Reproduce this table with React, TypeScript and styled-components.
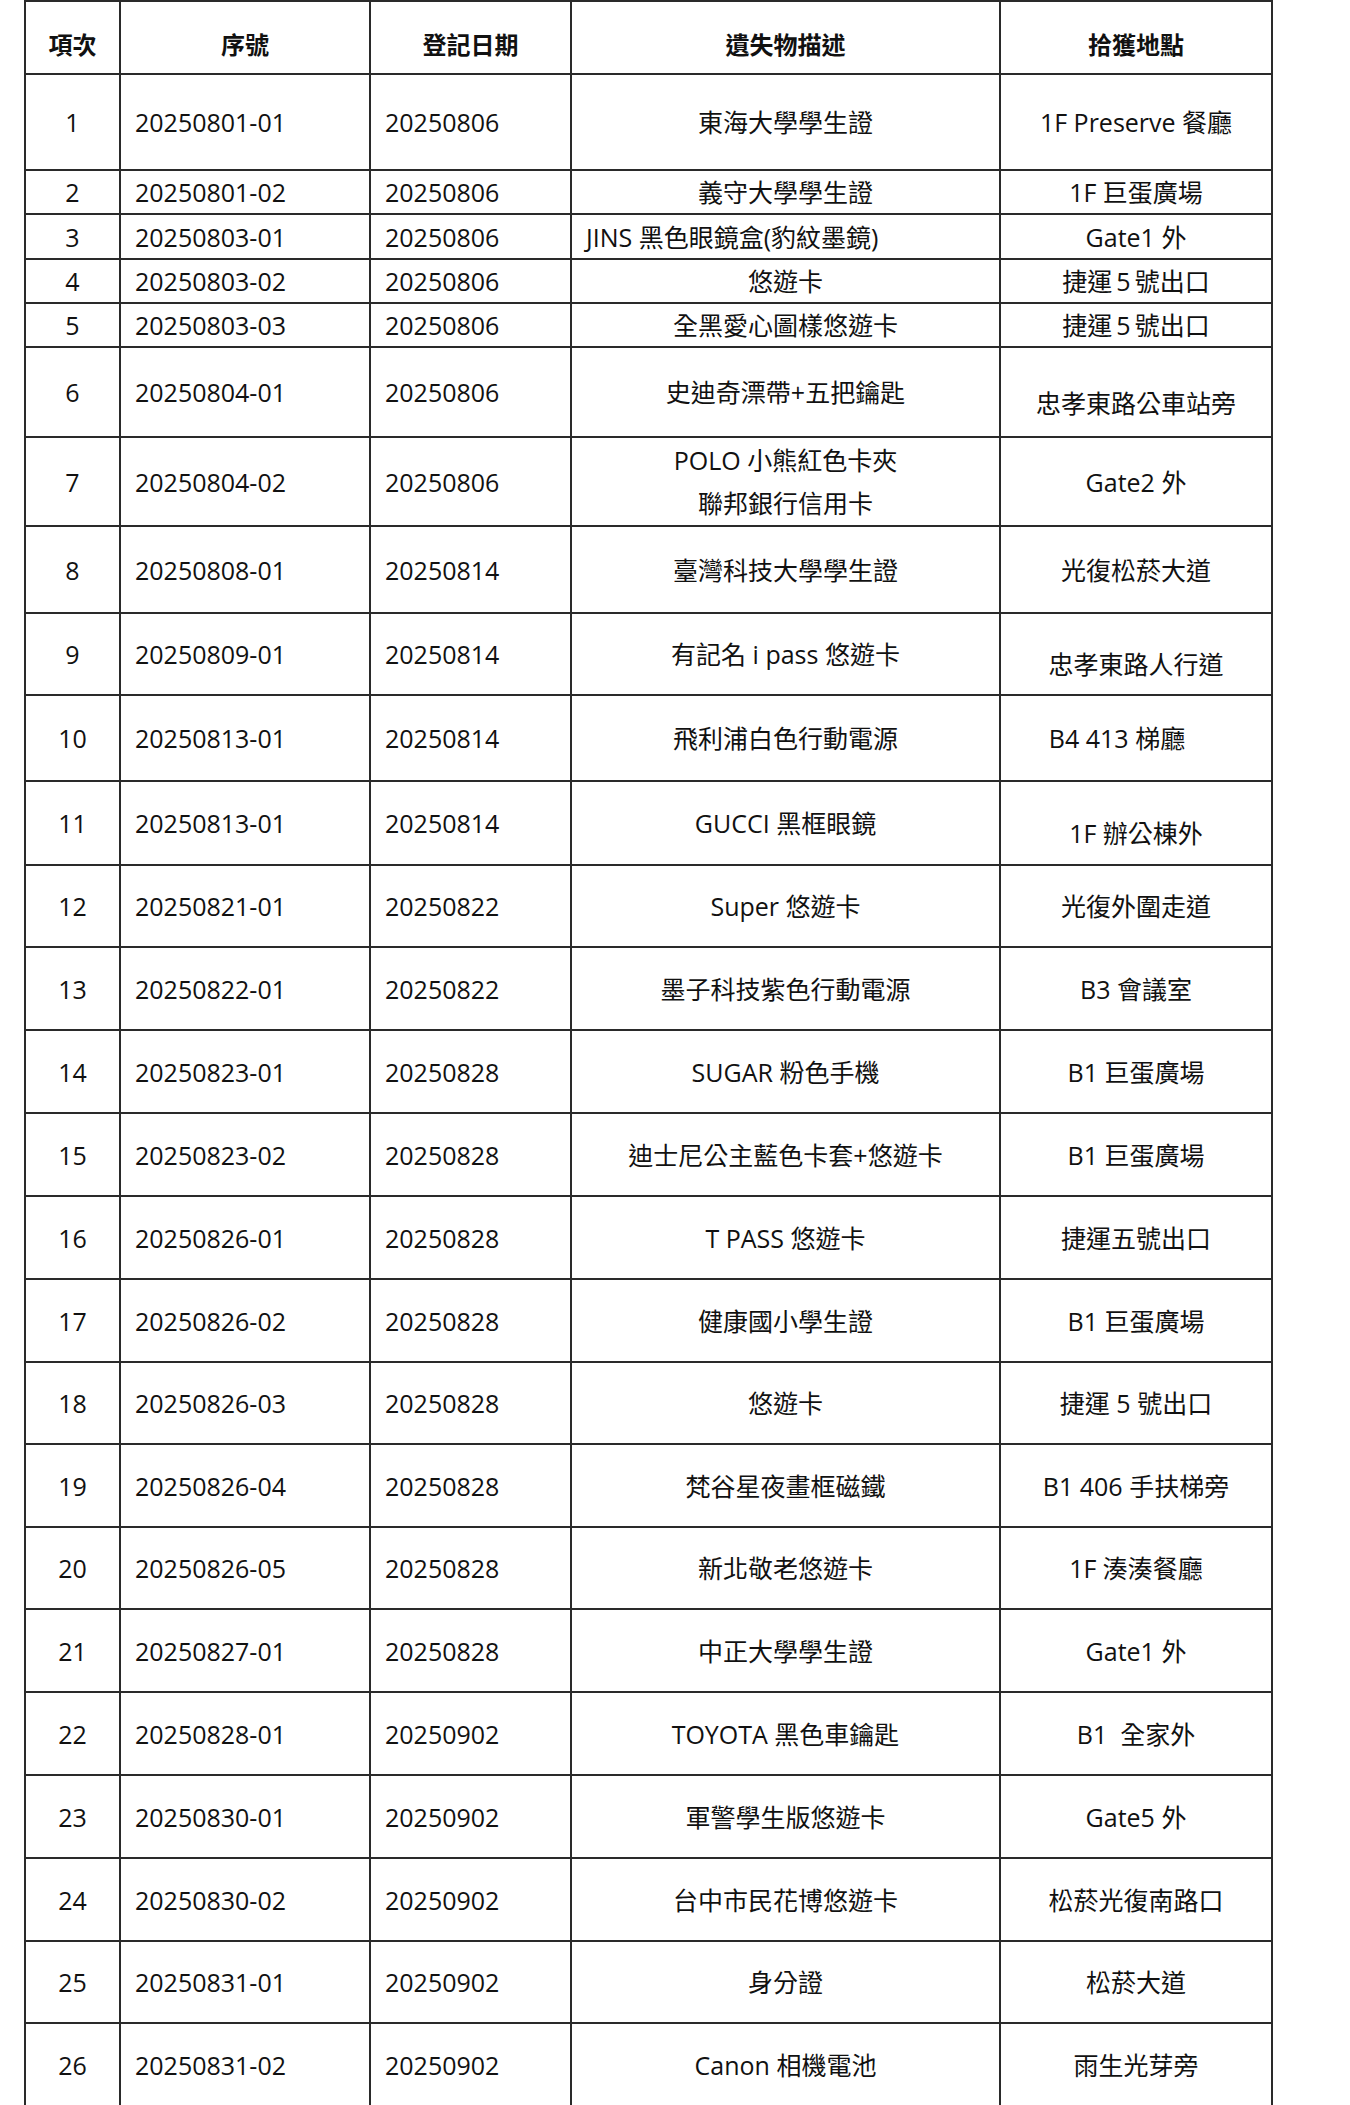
import React from "react";
import styled, { createGlobalStyle } from "styled-components";

const Global = createGlobalStyle`
  html, body { margin: 0; padding: 0; background: #ffffff; }
  body {
    font-family: "Open Sans", "Noto Sans CJK TC", "Noto Sans", sans-serif;
    color: #111111;
  }
`;

const Page = styled.div`
  width: 1350px;
  min-height: 2105px;
  padding: 0 0 0 24px;
  box-sizing: border-box;
  overflow: hidden;
`;

const Table = styled.table`
  border-collapse: collapse;
  table-layout: fixed;
  width: 1249px;
  font-size: 25px;
  line-height: 42px;
`;

const Row = styled.tr<{ $h: number }>`
  height: ${(p) => p.$h}px;
`;

const HeadCell = styled.th`
  border: 2px solid #2a2a2a;
  font-weight: 700;
  font-size: 24px;
  text-align: center;
  vertical-align: middle;
  padding: 14px 0 0 0;
  white-space: nowrap;
`;

type Align = "left" | "center";

const Cell = styled.td<{ $align: Align; $drop?: number; $shift?: number }>`
  border: 2px solid #2a2a2a;
  text-align: ${(p) => p.$align};
  vertical-align: middle;
  padding: ${(p) => (p.$drop ? p.$drop * 2 : 0)}px
    ${(p) => (p.$shift ? p.$shift : 0)}px 0
    ${(p) => (p.$align === "left" ? 14 : 0)}px;
  white-space: nowrap;
  overflow: visible;
  font-weight: 400;
`;

const Line = styled.div`
  line-height: 43px;
`;

type Item = {
  no: number;
  serial: string;
  date: string;
  desc: string[];
  place: string;
  h: number;
  descLeft?: boolean;
  placeDrop?: number;
  placeShift?: number;
};

const items: Item[] = [
  { no: 1, serial: "20250801-01", date: "20250806", desc: ["東海大學學生證"], place: "1F Preserve 餐廳", h: 96 },
  { no: 2, serial: "20250801-02", date: "20250806", desc: ["義守大學學生證"], place: "1F 巨蛋廣場", h: 44 },
  { no: 3, serial: "20250803-01", date: "20250806", desc: ["JINS 黑色眼鏡盒(豹紋墨鏡)"], place: "Gate1 外", h: 45, descLeft: true },
  { no: 4, serial: "20250803-02", date: "20250806", desc: ["悠遊卡"], place: "捷運\u20095\u2009號出口", h: 44 },
  { no: 5, serial: "20250803-03", date: "20250806", desc: ["全黑愛心圖樣悠遊卡"], place: "捷運\u20095\u2009號出口", h: 44 },
  { no: 6, serial: "20250804-01", date: "20250806", desc: ["史迪奇漂帶+五把鑰匙"], place: "忠孝東路公車站旁", h: 90, placeDrop: 11 },
  { no: 7, serial: "20250804-02", date: "20250806", desc: ["POLO 小熊紅色卡夾", "聯邦銀行信用卡"], place: "Gate2 外", h: 89 },
  { no: 8, serial: "20250808-01", date: "20250814", desc: ["臺灣科技大學學生證"], place: "光復松菸大道", h: 87 },
  { no: 9, serial: "20250809-01", date: "20250814", desc: ["有記名 i pass 悠遊卡"], place: "忠孝東路人行道", h: 82, placeDrop: 10 },
  { no: 10, serial: "20250813-01", date: "20250814", desc: ["飛利浦白色行動電源"], place: "B4 413 梯廳", h: 86, placeShift: 38 },
  { no: 11, serial: "20250813-01", date: "20250814", desc: ["GUCCI 黑框眼鏡"], place: "1F 辦公棟外", h: 84, placeDrop: 10 },
  { no: 12, serial: "20250821-01", date: "20250822", desc: ["Super 悠遊卡"], place: "光復外圍走道", h: 82 },
  { no: 13, serial: "20250822-01", date: "20250822", desc: ["墨子科技紫色行動電源"], place: "B3 會議室", h: 83 },
  { no: 14, serial: "20250823-01", date: "20250828", desc: ["SUGAR 粉色手機"], place: "B1 巨蛋廣場", h: 83 },
  { no: 15, serial: "20250823-02", date: "20250828", desc: ["迪士尼公主藍色卡套+悠遊卡"], place: "B1 巨蛋廣場", h: 83 },
  { no: 16, serial: "20250826-01", date: "20250828", desc: ["T PASS 悠遊卡"], place: "捷運五號出口", h: 83 },
  { no: 17, serial: "20250826-02", date: "20250828", desc: ["健康國小學生證"], place: "B1 巨蛋廣場", h: 83 },
  { no: 18, serial: "20250826-03", date: "20250828", desc: ["悠遊卡"], place: "捷運 5 號出口", h: 82 },
  { no: 19, serial: "20250826-04", date: "20250828", desc: ["梵谷星夜畫框磁鐵"], place: "B1 406 手扶梯旁", h: 83 },
  { no: 20, serial: "20250826-05", date: "20250828", desc: ["新北敬老悠遊卡"], place: "1F 湊湊餐廳", h: 82 },
  { no: 21, serial: "20250827-01", date: "20250828", desc: ["中正大學學生證"], place: "Gate1 外", h: 83 },
  { no: 22, serial: "20250828-01", date: "20250902", desc: ["TOYOTA 黑色車鑰匙"], place: "B1\u00a0\u00a0全家外", h: 83 },
  { no: 23, serial: "20250830-01", date: "20250902", desc: ["軍警學生版悠遊卡"], place: "Gate5 外", h: 83 },
  { no: 24, serial: "20250830-02", date: "20250902", desc: ["台中市民花博悠遊卡"], place: "松菸光復南路口", h: 83 },
  { no: 25, serial: "20250831-01", date: "20250902", desc: ["身分證"], place: "松菸大道", h: 82 },
  { no: 26, serial: "20250831-02", date: "20250902", desc: ["Canon 相機電池"], place: "雨生光芽旁", h: 84 },
];

export default function App() {
  return (
    <>
      <Global />
      <Page>
        <Table>
          <colgroup>
            <col style={{ width: 95 }} />
            <col style={{ width: 250 }} />
            <col style={{ width: 201 }} />
            <col style={{ width: 429 }} />
            <col style={{ width: 272 }} />
          </colgroup>
          <thead>
            <Row $h={73}>
              <HeadCell>項次</HeadCell>
              <HeadCell>序號</HeadCell>
              <HeadCell>登記日期</HeadCell>
              <HeadCell>遺失物描述</HeadCell>
              <HeadCell>拾獲地點</HeadCell>
            </Row>
          </thead>
          <tbody>
            {items.map((it) => (
              <Row key={it.no} $h={it.h}>
                <Cell $align="center">{it.no}</Cell>
                <Cell $align="left">{it.serial}</Cell>
                <Cell $align="left">{it.date}</Cell>
                <Cell $align={it.descLeft ? "left" : "center"}>
                  {it.desc.length > 1
                    ? it.desc.map((d) => <Line key={d}>{d}</Line>)
                    : it.desc[0]}
                </Cell>
                <Cell $align="center" $drop={it.placeDrop} $shift={it.placeShift}>
                  {it.place}
                </Cell>
              </Row>
            ))}
          </tbody>
        </Table>
      </Page>
    </>
  );
}
